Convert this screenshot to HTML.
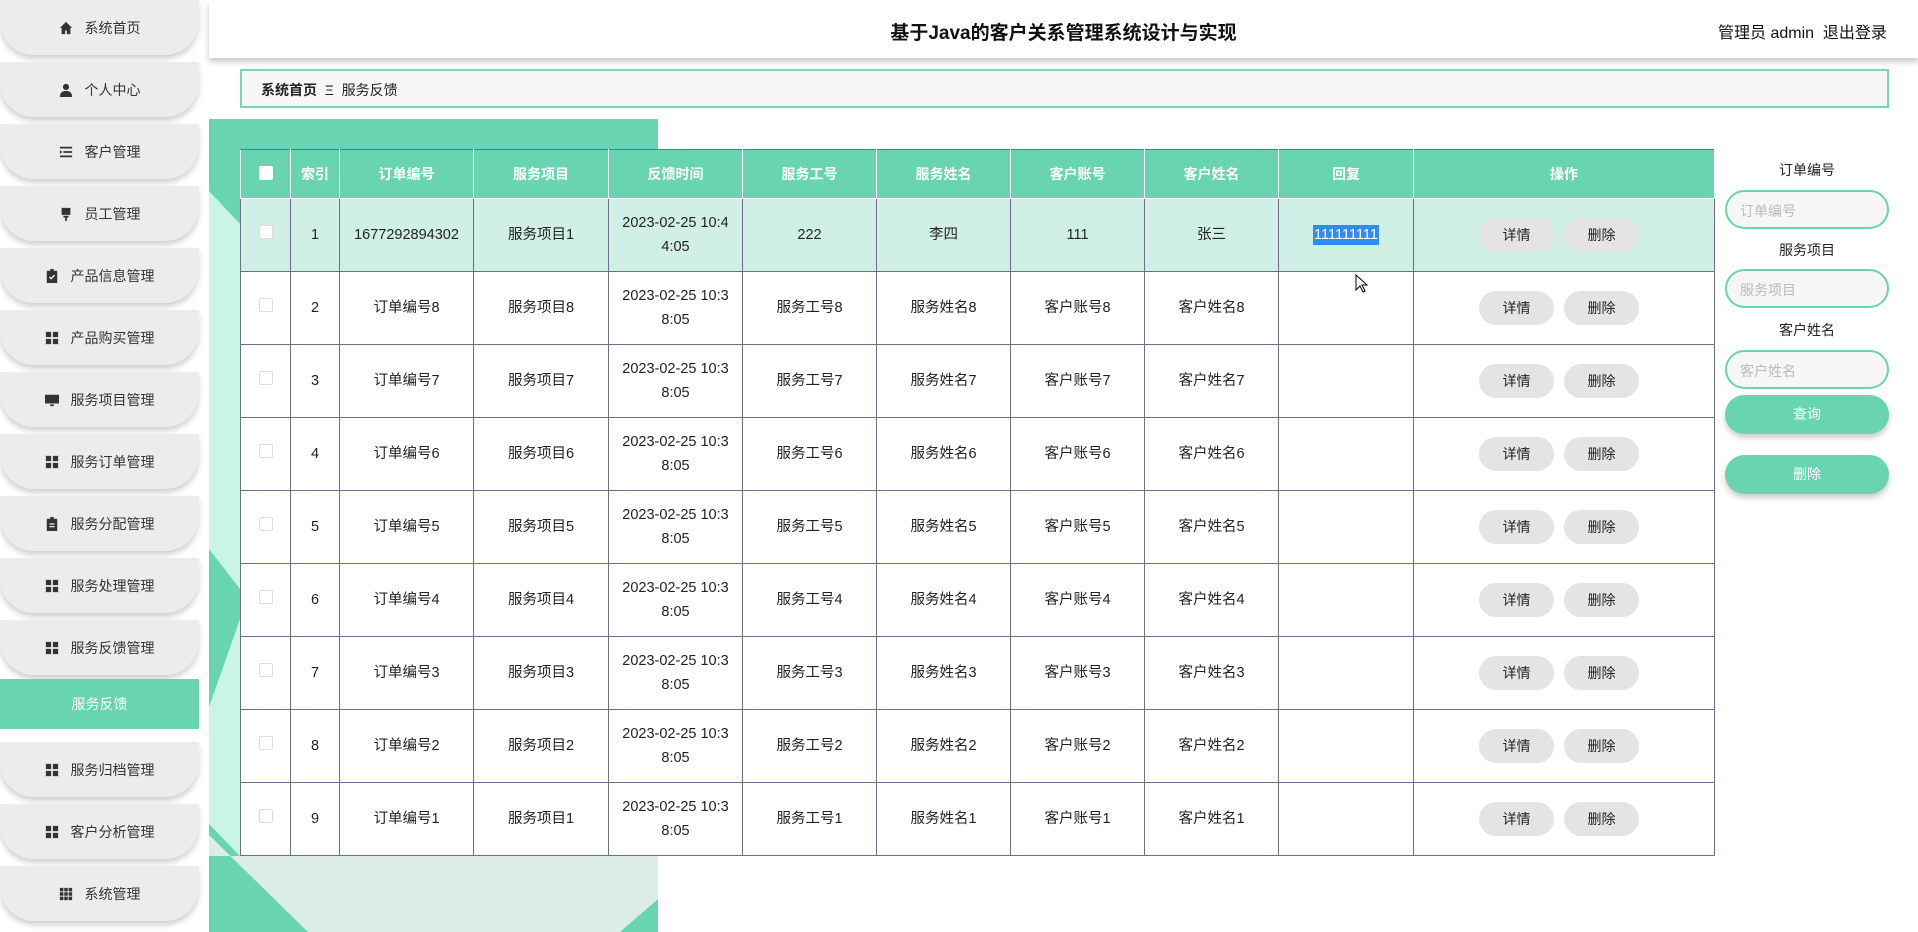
<!DOCTYPE html>
<html><head><meta charset="utf-8"><style>
*{margin:0;padding:0;box-sizing:border-box}
body{width:1918px;height:932px;overflow:hidden;background:#fff;font-family:"Liberation Sans","Noto Sans CJK SC",sans-serif;position:relative;color:#222}
.side{position:absolute;left:0;top:0;width:199px;height:932px;background:#fff}
.it{position:absolute;left:0;width:199px;height:55px;background:#ececec;border-radius:0 0 34px 34px;box-shadow:0 4px 6px rgba(0,0,0,.18);display:flex;align-items:center;justify-content:center;font-size:14px;color:#333}
.it svg{width:14px;height:14px;margin-right:12px;fill:#333}
.act{position:absolute;left:0;top:679px;width:199px;height:50px;background:#68d4b0;color:#fff;font-size:14px;display:flex;align-items:center;justify-content:center}
.hdr{position:absolute;left:209px;top:0;width:1709px;height:58px;background:#fff;box-shadow:0 4px 6px rgba(0,0,0,.22)}
.title{position:absolute;left:0;width:1709px;top:18px;text-align:center;font-size:19px;font-weight:bold;color:#111}
.user{position:absolute;left:1509px;top:19px;font-size:16px;color:#111;white-space:nowrap}
.bc{position:absolute;left:240px;top:69px;width:1649px;height:39px;border:2px solid #7dd3b5;background:#f7f6f6;font-size:14px;padding:9px 0 0 19px;color:#222}
.tbl{position:absolute;left:240px;top:149px;border-collapse:collapse;table-layout:fixed;width:1474px;font-size:14.5px;background:#fff}
.tbl td,.tbl th{border:1.5px solid #6e6e8c;text-align:center;vertical-align:middle}
.tbl th{background:#68d4b0;color:#fff;height:49px;font-size:14px;border-color:#fff;border-top-color:#6e6e8c}
.tbl td{height:73px;line-height:24px}
.tbl td:last-child{padding-right:10px}
.tbl tr.hl td{background:#d0f0e6}
.cb{display:inline-block;width:14px;height:14px;border:1px solid #ddd;background:#fff;border-radius:2px}
.btn{display:inline-block;width:75px;height:34px;line-height:34px;border-radius:17px;background:#e4e4e4;font-size:14px;margin:0 5px;color:#222}
.lab{position:absolute;left:1725px;width:164px;text-align:center;font-size:14px;color:#222}
.inp{position:absolute;left:1725px;width:164px;height:39px;border:2px solid #68d4b0;border-radius:20px;background:#f7f6f6;color:#bbb;font-size:14px;padding:9px 0 0 13px}
.gb{position:absolute;left:1725px;width:164px;height:39px;border-radius:20px;background:#68d4b0;color:#fff;font-size:14px;text-align:center;line-height:39px;box-shadow:0 4px 6px rgba(0,0,0,.2)}
</style></head><body>
<svg style="position:absolute;left:209px;top:119px" width="449" height="813">
<rect width="449" height="813" fill="#68d4b0"/>
<polygon points="0,72 31,105 31,737 0,705" fill="#c9f5e7"/>
<polygon points="0,430 31,470 31,500 0,588" fill="#68d4b0"/>
<polygon points="0,716 99,813 411,813 449,780 449,737 0,737" fill="#dcece7"/>
</svg>
<div class="side">
<div class="it" style="top:0"><svg viewBox="0 0 16 16"><path d="M8 1L1 8h2v7h4v-4h2v4h4V8h2z"/></svg>系统首页</div>
<div class="it" style="top:62px"><svg viewBox="0 0 16 16"><circle cx="8" cy="4.5" r="3.5"/><path d="M1 16c0-5 3-7 7-7s7 2 7 7z"/></svg>个人中心</div>
<div class="it" style="top:124px"><svg viewBox="0 0 16 16"><path d="M1 2h14v2H1zM5 7h10v2H5zM1 12h14v2H1zM1 6l3 2-3 2z"/></svg>客户管理</div>
<div class="it" style="top:186px"><svg viewBox="0 0 16 16"><path d="M3 1h10v8H3zM5 10h6v2H9v4H7v-4H5z"/></svg>员工管理</div>
<div class="it" style="top:248px"><svg viewBox="0 0 16 16"><path d="M2 2h12v14H2zM6 0h4v3H6z"/><path d="M5 9l2 2 4-4" stroke="#ececec" stroke-width="1.6" fill="none"/></svg>产品信息管理</div>
<div class="it" style="top:310px"><svg viewBox="0 0 16 16"><path d="M1 1h6v6H1zM9 1h6v6H9zM1 9h6v6H1zM9 9h6v6H9z"/></svg>产品购买管理</div>
<div class="it" style="top:372px"><svg viewBox="0 0 16 16"><path d="M0 2h16v10H0zM6 13h4v2H6z"/></svg>服务项目管理</div>
<div class="it" style="top:434px"><svg viewBox="0 0 16 16"><path d="M1 1h6v6H1zM9 1h6v6H9zM1 9h6v6H1zM9 9h6v6H9z"/></svg>服务订单管理</div>
<div class="it" style="top:496px"><svg viewBox="0 0 16 16"><path d="M2 2h12v14H2zM6 0h4v3H6z"/><path d="M5 8h6M5 11h6" stroke="#ececec" stroke-width="1.5"/></svg>服务分配管理</div>
<div class="it" style="top:558px"><svg viewBox="0 0 16 16"><path d="M1 1h6v6H1zM9 1h6v6H9zM1 9h6v6H1zM9 9h6v6H9z"/></svg>服务处理管理</div>
<div class="it" style="top:620px"><svg viewBox="0 0 16 16"><path d="M1 1h6v6H1zM9 1h6v6H9zM1 9h6v6H1zM9 9h6v6H9z"/></svg>服务反馈管理</div>
<div class="act">服务反馈</div>
<div class="it" style="top:742px"><svg viewBox="0 0 16 16"><path d="M1 1h6v6H1zM9 1h6v6H9zM1 9h6v6H1zM9 9h6v6H9z"/></svg>服务归档管理</div>
<div class="it" style="top:804px"><svg viewBox="0 0 16 16"><path d="M1 1h6v6H1zM9 1h6v6H9zM1 9h6v6H1zM9 9h6v6H9z"/></svg>客户分析管理</div>
<div class="it" style="top:866px"><svg viewBox="0 0 16 16"><path d="M1 1h4v4H1zM6 1h4v4H6zM11 1h4v4h-4zM1 6h4v4H1zM6 6h4v4H6zM11 6h4v4h-4zM1 11h4v4H1zM6 11h4v4H6zM11 11h4v4h-4z"/></svg>系统管理</div>
</div>
<div class="hdr"><div class="title">基于Java的客户关系管理系统设计与实现</div><div class="user">管理员 admin&nbsp;&nbsp;退出登录</div></div>
<div class="bc"><b>系统首页</b>&nbsp;&nbsp;Ξ&nbsp;&nbsp;服务反馈</div>
<table class="tbl">
<colgroup><col style="width:50px"><col style="width:49px"><col style="width:134px"><col style="width:135px"><col style="width:134px"><col style="width:134px"><col style="width:134px"><col style="width:134px"><col style="width:134px"><col style="width:135px"><col style="width:301px"></colgroup>
<tr><th><span class="cb" style="border:none"></span></th><th>索引</th><th>订单编号</th><th>服务项目</th><th>反馈时间</th><th>服务工号</th><th>服务姓名</th><th>客户账号</th><th>客户姓名</th><th>回复</th><th style="padding-right:0">操作</th></tr>
<tr class="hl"><td><span class="cb"></span></td><td>1</td><td>1677292894302</td><td>服务项目1</td><td>2023-02-25 10:4<br>4:05</td><td>222</td><td>李四</td><td>111</td><td>张三</td><td><span style="background:#2f8cf5;color:#fff;padding:2px 1px">111111111</span></td><td><span class="btn">详情</span><span class="btn">删除</span></td></tr>
<tr><td><span class="cb"></span></td><td>2</td><td>订单编号8</td><td>服务项目8</td><td>2023-02-25 10:3<br>8:05</td><td>服务工号8</td><td>服务姓名8</td><td>客户账号8</td><td>客户姓名8</td><td></td><td><span class="btn">详情</span><span class="btn">删除</span></td></tr>
<tr><td><span class="cb"></span></td><td>3</td><td>订单编号7</td><td>服务项目7</td><td>2023-02-25 10:3<br>8:05</td><td>服务工号7</td><td>服务姓名7</td><td>客户账号7</td><td>客户姓名7</td><td></td><td><span class="btn">详情</span><span class="btn">删除</span></td></tr>
<tr><td><span class="cb"></span></td><td>4</td><td>订单编号6</td><td>服务项目6</td><td>2023-02-25 10:3<br>8:05</td><td>服务工号6</td><td>服务姓名6</td><td>客户账号6</td><td>客户姓名6</td><td></td><td><span class="btn">详情</span><span class="btn">删除</span></td></tr>
<tr><td><span class="cb"></span></td><td>5</td><td>订单编号5</td><td>服务项目5</td><td>2023-02-25 10:3<br>8:05</td><td>服务工号5</td><td>服务姓名5</td><td>客户账号5</td><td>客户姓名5</td><td></td><td><span class="btn">详情</span><span class="btn">删除</span></td></tr>
<tr><td><span class="cb"></span></td><td>6</td><td>订单编号4</td><td>服务项目4</td><td>2023-02-25 10:3<br>8:05</td><td>服务工号4</td><td>服务姓名4</td><td>客户账号4</td><td>客户姓名4</td><td></td><td><span class="btn">详情</span><span class="btn">删除</span></td></tr>
<tr><td><span class="cb"></span></td><td>7</td><td>订单编号3</td><td>服务项目3</td><td>2023-02-25 10:3<br>8:05</td><td>服务工号3</td><td>服务姓名3</td><td>客户账号3</td><td>客户姓名3</td><td></td><td><span class="btn">详情</span><span class="btn">删除</span></td></tr>
<tr><td><span class="cb"></span></td><td>8</td><td>订单编号2</td><td>服务项目2</td><td>2023-02-25 10:3<br>8:05</td><td>服务工号2</td><td>服务姓名2</td><td>客户账号2</td><td>客户姓名2</td><td></td><td><span class="btn">详情</span><span class="btn">删除</span></td></tr>
<tr><td><span class="cb"></span></td><td>9</td><td>订单编号1</td><td>服务项目1</td><td>2023-02-25 10:3<br>8:05</td><td>服务工号1</td><td>服务姓名1</td><td>客户账号1</td><td>客户姓名1</td><td></td><td><span class="btn">详情</span><span class="btn">删除</span></td></tr>
</table>
<svg style="position:absolute;left:1355px;top:274px" width="14" height="20" viewBox="0 0 14 20"><path d="M1 1v15l4-4 3 6 2-1-3-6h5z" fill="#fff" stroke="#000" stroke-width="1"/></svg>
<div class="lab" style="top:160px">订单编号</div>
<div class="inp" style="top:190px">订单编号</div>
<div class="lab" style="top:240px">服务项目</div>
<div class="inp" style="top:269px">服务项目</div>
<div class="lab" style="top:320px">客户姓名</div>
<div class="inp" style="top:350px">客户姓名</div>
<div class="gb" style="top:395px">查询</div>
<div class="gb" style="top:455px">删除</div>
</body></html>
